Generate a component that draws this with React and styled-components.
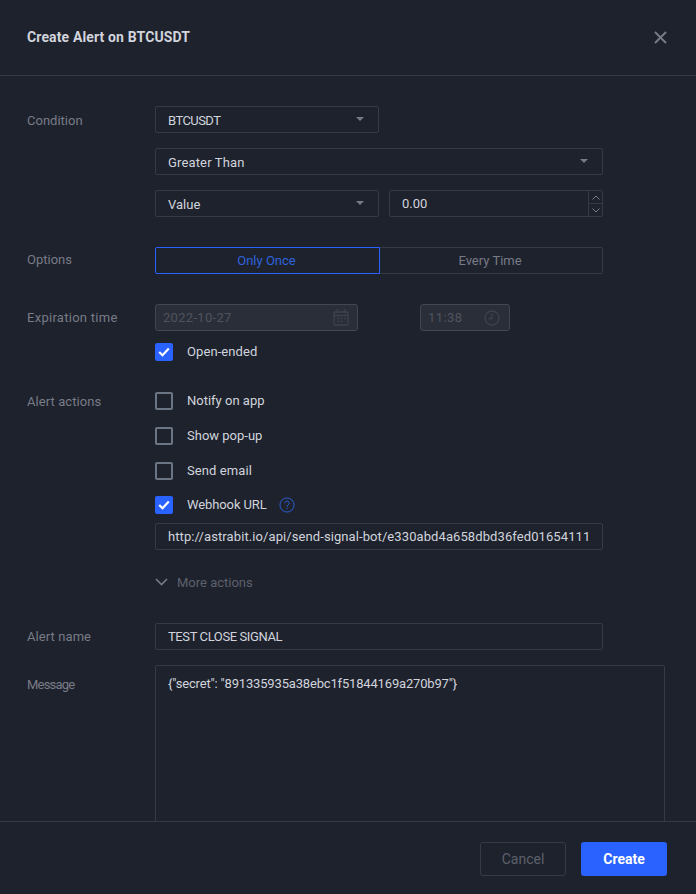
import React from "react";
import styled, { createGlobalStyle } from "styled-components";

const Global = createGlobalStyle`
  html, body { margin: 0; padding: 0; background: #1e222d; height: 100%; }
  * { box-sizing: border-box; }
`;
const Dialog = styled.div`
  width: 696px; height: 894px; background: #1e222d; color: #d1d4dc; display: flex; flex-direction: column;
  font-family: Roboto, "Liberation Sans", sans-serif; font-size: 13px; overflow: hidden;
`;
const Header = styled.header`
  height: 76px; flex: none; border-bottom: 1px solid #363a45; display: flex; align-items: center;
  justify-content: space-between; padding: 0 29px 1px 27px;
`;
const Title = styled.h1`margin: 0; font-size: 14px; font-weight: 700; color: #d1d4dc; letter-spacing: 0.13px;`;
const Close = styled.button`
  padding: 0; border: 0; background: none; width: 13px; height: 13px; display: flex; color: #787b86; margin-top: 1px;
`;
const Body = styled.main`
  flex: 1; min-height: 0; overflow: hidden; padding: 30px 31px 0 27px; display: flex; flex-direction: column;
`;
const Row = styled.section`
  display: grid; grid-template-columns: 128px 1fr; margin-bottom: ${p => p.$mb ?? 30}px;
`;
const Label = styled.div`
  color: #787b86; height: 27px; line-height: 27px; letter-spacing: ${p => p.$ls ?? 0}px;
  transform: translateY(${p => p.$dy ?? 0}px);
`;
const Stack = styled.div`display: flex; flex-direction: column; gap: ${p => p.$gap ?? 15}px; width: ${p => p.$w ?? 448}px;`;
const Line = styled.div`display: flex; gap: 10px;`;
const Select = styled.div`
  width: ${p => p.$w ? p.$w + "px" : "100%"}; height: 27px; border: 1px solid #363a45; border-radius: 2px; flex: none;
  display: flex; align-items: center; justify-content: space-between; padding: 1px 14px 0 12px; color: #d1d4dc; line-height: 1;
`;
const Spaced = styled.span`letter-spacing: ${p => p.$ls ?? 0}px;`;
const Caret = styled.span`
  width: 0; height: 0; border-left: 4px solid transparent; border-right: 4px solid transparent;
  border-top: 4px solid #787b86; margin-top: -2px;
`;
const NumberBox = styled.div`
  flex: 1; height: 27px; border: 1px solid #363a45; border-radius: 2px; display: flex; align-items: stretch;
`;
const NumberValue = styled.div`flex: 1; padding-left: 12px; display: flex; align-items: center;`;
const Steppers = styled.div`
  width: 14px; border-left: 1px solid #363a45; display: flex; flex-direction: column;
`;
const Step = styled.div`
  flex: 1; display: flex; align-items: center; justify-content: center; color: #787b86;
  & + & { border-top: 1px solid #363a45; }
`;
const Toggle = styled.div`display: flex; height: 27px;`;
const ToggleOn = styled.div`
  flex: 0 0 225px; display: flex; align-items: center; justify-content: center; padding-right: 2px;
  border: 1px solid #2962ff; border-radius: 2px 0 0 2px; color: #2f62dd;
`;
const ToggleOff = styled.div`
  flex: 1; display: flex; align-items: center; justify-content: center; padding-right: 2px;
  border: 1px solid #363a45; border-left: 0; border-radius: 0 2px 2px 0; color: #787b86;
`;
const DateLine = styled.div`display: flex; gap: 62px;`;
const Disabled = styled.div`
  width: ${p => p.$w}px; height: 27px; background: #2a2e39; border: 1px solid #434651; border-radius: 3px;
  display: flex; align-items: center; justify-content: space-between; padding: 0 ${p => p.$pr ?? 8}px 0 7px; color: #50535e; flex: none;
`;
const CheckRow = styled.label`display: flex; align-items: center; height: 18px; line-height: 18px; color: #d1d4dc;`;
const Box = styled.span`
  width: 18px; height: 18px; border-radius: 2px; flex: none; margin-right: 14px; display: flex; align-items: center; justify-content: center;
  background: ${p => p.$on ? "#2962ff" : "transparent"};
  border: ${p => p.$on ? "0" : "2px solid #6a7684"};
`;
const Help = styled.span`display: flex; margin-left: 12px;`;
const Webhook = styled.div`display: flex; flex-direction: column; gap: 9px; margin-top: -1px;`;
const TextField = styled.div`
  height: 27px; border: 1px solid #363a45; border-radius: 2px; display: flex; align-items: center; padding-left: 12px;
  white-space: nowrap; overflow: hidden; color: #d1d4dc; letter-spacing: ${p => p.$ls ?? 0}px;
`;
const More = styled.div`
  display: flex; align-items: center; gap: 9px; color: #5d606b; height: 18px; margin-top: 6px; margin-bottom: 32px;
`;
const Message = styled.div`
  width: 510px; height: 300px; flex: none; border: 1px solid #363a45; border-radius: 2px; padding: 10px 12px; line-height: 16px; color: #d1d4dc;
  letter-spacing: -0.17px;
`;
const Footer = styled.footer`
  height: 73px; flex: none; border-top: 1px solid #363a45; display: flex; justify-content: flex-end; align-items: flex-start;
  padding: 20px 29px 0 0; gap: 15px; background: #1e222d;
`;
const Btn = styled.button`
  width: 86px; height: 34px; border-radius: 3px; font: ${p => p.$primary ? 700 : 400} 14px Roboto, "Liberation Sans", sans-serif;
  background: ${p => p.$primary ? "#2962ff" : "transparent"};
  color: ${p => p.$primary ? "#fff" : "#5d606b"};
  border: ${p => p.$primary ? "0" : "1px solid #363a45"}; padding: 0;
`;

const Check = () => (
  <svg width="12" height="10" viewBox="0 0 12 10" fill="none" stroke="#fff" strokeWidth="2.2">
    <path d="M1.2 5l3.3 3.2L10.8 1.5" />
  </svg>
);
const CheckItem = ({ on, children, extra }) => (
  <CheckRow>
    <Box $on={on}>{on && <Check />}</Box>
    {children}
    {extra}
  </CheckRow>
);

export default function App() {
  return (
    <Dialog>
      <Global />
      <Header>
        <Title>Create Alert on BTCUSDT</Title>
        <Close aria-label="Close">
          <svg width="13" height="13" viewBox="0 0 13 13" stroke="currentColor" strokeWidth="1.9" fill="none">
            <path d="M1 1l11 11M12 1L1 12" />
          </svg>
        </Close>
      </Header>
      <Body>
        <Row>
          <Label $dy={1}>Condition</Label>
          <Stack>
            <Select $w={224}><Spaced $ls={-0.55}>BTCUSDT</Spaced><Caret /></Select>
            <Select><Spaced $ls={0.15}>Greater Than</Spaced><Caret /></Select>
            <Line>
              <Select $w={224}>Value<Caret /></Select>
              <NumberBox>
                <NumberValue>0.00</NumberValue>
                <Steppers>
                  <Step><svg width="8" height="5" viewBox="0 0 8 5" fill="none" stroke="currentColor"><path d="M.5 4.5L4 1l3.5 3.5" /></svg></Step>
                  <Step><svg width="8" height="5" viewBox="0 0 8 5" fill="none" stroke="currentColor"><path d="M.5.5L4 4 7.5.5" /></svg></Step>
                </Steppers>
              </NumberBox>
            </Line>
          </Stack>
        </Row>
        <Row>
          <Label $dy={-1}>Options</Label>
          <Stack>
            <Toggle>
              <ToggleOn>Only Once</ToggleOn>
              <ToggleOff>Every Time</ToggleOff>
            </Toggle>
          </Stack>
        </Row>
        <Row $mb={31}>
          <Label $ls={0.28}>Expiration time</Label>
          <Stack $gap={12}>
            <DateLine>
              <Disabled $w={203}>
                <Spaced $ls={0.3}>2022-10-27</Spaced>
                <svg width="16" height="17" viewBox="0 0 16 17" fill="none" stroke="#3d414d" strokeWidth="1.4">
                  <rect x="1" y="3" width="14" height="13" rx="1" />
                  <path d="M1 6.5h14M4.5 0v4M11.5 0v4" />
                  <path d="M4 9.5h2M7.5 9.5h2M11 9.5h2M4 12.5h2M7.5 12.5h2" />
                </svg>
              </Disabled>
              <Disabled $w={90} $pr={9}>
                <Spaced $ls={0.4}>11:38</Spaced>
                <svg width="16" height="16" viewBox="0 0 16 16" fill="none" stroke="#3d414d" strokeWidth="1.4">
                  <circle cx="8" cy="8" r="7" />
                  <path d="M8 4v4.5H4.5" />
                </svg>
              </Disabled>
            </DateLine>
            <CheckItem on><Spaced $ls={0.08}>Open-ended</Spaced></CheckItem>
          </Stack>
        </Row>
        <Row $mb={0}>
          <Label $dy={-4} $ls={0.08}>Alert actions</Label>
          <Stack $gap={17}>
            <CheckItem>Notify on app</CheckItem>
            <CheckItem>Show pop-up</CheckItem>
            <CheckItem><Spaced $ls={0.1}>Send email</Spaced></CheckItem>
            <Webhook>
              <CheckItem on extra={
                <Help>
                  <svg width="16" height="16" viewBox="0 0 17 17" fill="none" stroke="#2f62dd">
                    <circle cx="8.5" cy="8.5" r="7.5" />
                    <path d="M6.3 6.6c0-3 4.6-3 4.6-.1 0 1.9-2.4 1.8-2.4 4" />
                    <path d="M8.5 11.6v1.4" />
                  </svg>
                </Help>
              }><Spaced $ls={-0.1}>Webhook URL</Spaced></CheckItem>
              <TextField $ls={0.09}>http://astrabit.io/api/send-signal-bot/e330abd4a658dbd36fed01654111</TextField>
            </Webhook>
            <More>
              <svg width="13" height="8" viewBox="0 0 13 8" fill="none" stroke="#787b86" strokeWidth="1.6"><path d="M1 1l5.5 5.5L12 1" /></svg>
              More actions
            </More>
          </Stack>
        </Row>
        <Row $mb={15}>
          <Label $ls={0.08}>Alert name</Label>
          <Stack><TextField $ls={-0.4}>TEST CLOSE SIGNAL</TextField></Stack>
        </Row>
        <Row $mb={0}>
          <Label $dy={6} $ls={-0.8}>Message</Label>
          <Message>{'{"secret": "891335935a38ebc1f51844169a270b97"}'}</Message>
        </Row>
      </Body>
      <Footer>
        <Btn>Cancel</Btn>
        <Btn $primary>Create</Btn>
      </Footer>
    </Dialog>
  );
}
